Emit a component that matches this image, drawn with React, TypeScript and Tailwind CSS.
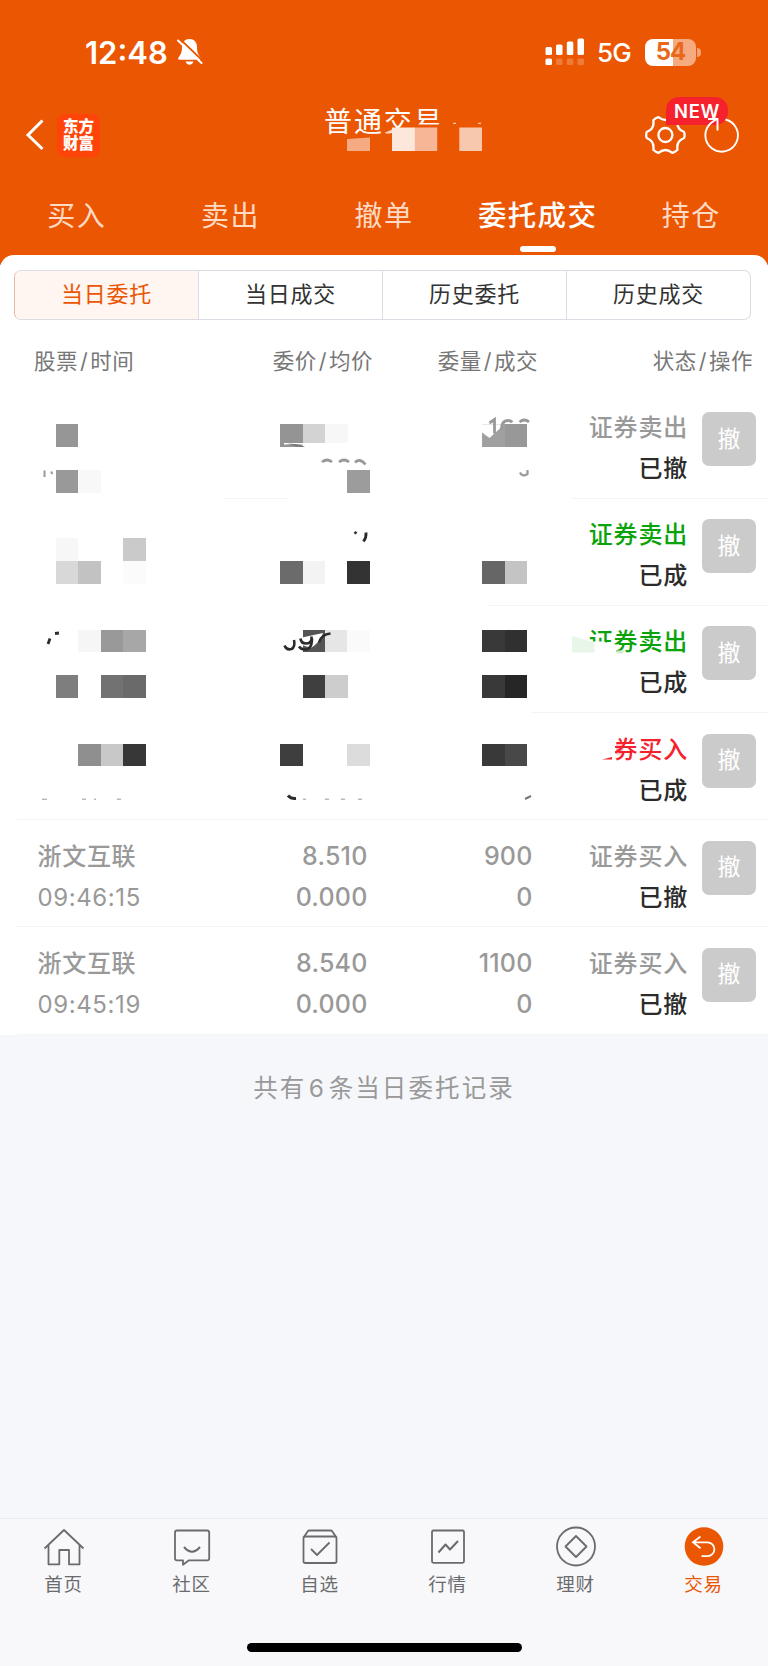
import React from "react";

const ORANGE = "#eb5602";

type Order = {
  name?: string;
  time?: string;
  price?: string;
  avg?: string;
  qty?: string;
  filled?: string;
  side: string;
  sideClass: string;
  status: string;
  divider: string;
};

const orders: Order[] = [
  { side: "证券卖出", sideClass: "text-[#999]", status: "已撤", divider: "ml-[572px]" },
  { side: "证券卖出", sideClass: "text-[#0aa30a]", status: "已成", divider: "ml-[488px]" },
  { side: "证券卖出", sideClass: "text-[#0aa30a]", status: "已成", divider: "ml-[531px]" },
  { side: "证券买入", sideClass: "text-[#f5222d]", status: "已成", divider: "ml-[17px]" },
  { name: "浙文互联", time: "09:46:15", price: "8.510", avg: "0.000", qty: "900", filled: "0", side: "证券买入", sideClass: "text-[#999]", status: "已撤", divider: "ml-[17px]" },
  { name: "浙文互联", time: "09:45:19", price: "8.540", avg: "0.000", qty: "1100", filled: "0", side: "证券买入", sideClass: "text-[#999]", status: "已撤", divider: "ml-[17px]" },
];

function StatusBar() {
  return (
    <div className="flex h-[104px] items-center pl-[85px] text-white">
      <span className="w-[85px] whitespace-nowrap text-[31px] font-semibold leading-none">12:48</span>
      <svg className="ml-[7px]" width="26" height="28" viewBox="1 1 26 28">
        <path d="M13.500 2c-4.600 0-7.500 3.400-7.500 8 0 5.500-1.300 7.500-3.500 10.500-.8 1-.4 2.300 1 2.300h20c1.400 0 1.800-1.300 1-2.300-2.200-3-3.500-5-3.500-10.500 0-4.600-2.900-8-7.500-8z" fill="#fff" />
        <path d="M9.500 24.600h8c-.5 2-2 3.200-4 3.200s-3.500-1.200-4-3.200z" fill="#fff" />
        <path d="M3.500 1.500l24 23" stroke={ORANGE} strokeWidth="1.800" />
        <path d="M2 3.500l23.500 22.500" stroke="#fff" strokeWidth="2" strokeLinecap="round" />
      </svg>
      <svg className="ml-[342px]" width="40" height="28" viewBox="0 0 40 28" fill="#fff">
        <rect x="0.500" y="9" width="6.500" height="8" rx="1.500" />
        <rect x="11" y="6.500" width="6.500" height="10.500" rx="1.500" />
        <rect x="21.800" y="3.500" width="6.500" height="13.500" rx="1.500" />
        <rect x="32.500" y="0.500" width="6.500" height="16.500" rx="1.500" />
        <rect x="0.500" y="20.500" width="6.500" height="6.500" rx="1.500" />
        <g opacity="0.22">
          <rect x="11" y="20.500" width="6.500" height="6.500" rx="1.500" />
          <rect x="21.800" y="20.500" width="6.500" height="6.500" rx="1.500" />
          <rect x="32.500" y="20.500" width="6.500" height="6.500" rx="1.500" />
        </g>
      </svg>
      <span className="ml-[12px] w-[35px] whitespace-nowrap pt-[2px] text-[26px] font-medium leading-none tracking-[-0.700px]">5G</span>
      <div className="ml-[13px] flex h-[27px] w-[51px] items-center justify-center rounded-[8px] bg-[linear-gradient(90deg,#fff_54%,#f5aa80_54%)] text-[24px] font-bold leading-none tracking-[-1px] text-[#e8681c]">
        54
      </div>
      <div className="ml-[1px] h-[9px] w-[4px] rounded-r-full bg-[#f3a075]" />
    </div>
  );
}

function NavBar() {
  return (
    <div className="flex h-[62px] items-center">
      <svg className="ml-[25px]" width="20" height="32" viewBox="0 0 20 32" fill="none" stroke="#fff" strokeWidth="3">
        <path d="M17.500 1.500L3 16l14.500 14" />
      </svg>
      <div className="ml-[12px] flex h-[43px] w-[43px] flex-col items-center justify-center rounded-[8px] bg-[#ff4409] text-[15.500px] font-black leading-[17px] text-white">
        <span>东方</span>
        <span>财富</span>
      </div>
      <div className="relative ml-[224px] w-[166px]">
        <div className="-mt-[27px] whitespace-nowrap text-[28px] leading-[30px] tracking-[1.900px] text-white">普通交易</div>
        <svg className="absolute left-0 top-[-26px]" width="166" height="48" viewBox="324 107.500 166 48">
          <path d="M385 132.500l11 1.500v16h-11zM407 124h60v12h-60z" fill={ORANGE} />
          <path d="M386 132.500q5-1.500 9-4.500" stroke="#f8c9ae" strokeWidth="1.800" fill="none" />
          <path d="M347 138.500l23-1.500v13.500h-23z" fill="#f5aa82" />
          <rect x="392" y="127" width="23" height="23.500" fill="#fde6da" />
          <rect x="414.800" y="127" width="22.400" height="23.500" fill="#f7b696" />
          <rect x="459.300" y="127" width="22.700" height="23.500" fill="#f8c8ae" />
          <path d="M453 122.800h3M478 122.800h3" stroke="#f8c8ae" strokeWidth="1.300" />
        </svg>
      </div>
      <div className="relative ml-[155px] h-[44px] w-[100px]">
        <svg className="absolute left-0 top-0" width="44" height="44" viewBox="-20.400 -22 44 44" fill="none" stroke="#fff" strokeWidth="2.300" strokeLinejoin="round">
          <circle r="7" />
          <path d="M18.700-3Q19.700 0 18.700 3Q10.600 6.100 12.100 14.700Q9.800 17 6.900 17.800Q0 12.200-6.900 17.800Q-9.800 17-12.100 14.700Q-10.600 6.100-18.700 3Q-19.700 0-18.700-3Q-10.600-6.100-12.100-14.700Q-9.800-17-6.900-17.800Q0-12.200 6.900-17.800Q9.800-17 12.100-14.700Q10.600-6.100 18.700-3z" />
        </svg>
        <div className="absolute left-[21px] top-[-16.500px] flex h-[28.500px] w-[62px] items-center justify-center rounded-[13px] rounded-bl-none bg-[#f5222d] text-[18.500px] font-semibold leading-none tracking-[0.700px] text-white">
          NEW
        </div>
        <svg className="absolute left-0 top-0" width="100" height="44" viewBox="645 113 100 44" fill="none" stroke="#fff" strokeWidth="1.900">
          <path d="M725.500 119.500a16.300 16.300 0 1 1-14.500 3.500q3-2.500 6.500-4" />
          <path d="M708 119h9.500v11.500" />
        </svg>
      </div>
    </div>
  );
}

function MainTabs() {
  const tabs = ["买入", "卖出", "撤单", "委托成交", "持仓"];
  return (
    <div className="grid h-[89px] grid-cols-5">
      {tabs.map((t) => {
        const active = t === "委托成交";
        return (
          <div key={t} className="flex flex-col items-center pt-[29.500px]">
            <span
              className={
                active
                  ? "whitespace-nowrap text-[28.500px] font-medium leading-[40px] tracking-[1.300px] text-white"
                  : "whitespace-nowrap text-[28px] leading-[40px] tracking-[1.500px] text-[#ffdac5]"
              }
            >
              {t}
            </span>
            {active && <span className="mt-[10.500px] h-[5.500px] w-[36px] rounded-full bg-white" />}
          </div>
        );
      })}
    </div>
  );
}

function Segments() {
  const items = ["当日委托", "当日成交", "历史委托", "历史成交"];
  return (
    <div className="ml-[14px] flex h-[50px] w-[737px] overflow-hidden rounded-[7px] border border-[#dcdce4] border-l-[#e9b79e] text-[22px] tracking-[0.700px]">
      {items.map((t, i) => (
        <div
          key={t}
          className={
            i === 0
              ? "flex flex-1 items-center justify-center bg-[#fff5f1] text-[#eb5602]"
              : "flex flex-1 items-center justify-center border-l border-[#dcdce4] text-[#333]"
          }
        >
          {t}
        </div>
      ))}
    </div>
  );
}

function Heading({ a, b, className }: { a: string; b: string; className: string }) {
  return (
    <span className={className}>
      {a}
      <span className="mx-[2px]">/</span>
      {b}
    </span>
  );
}

function OrderRow({ o }: { o: Order }) {
  return (
    <div className="flex h-[107.200px] flex-col">
      <div className="flex h-[106.200px] pl-[37.500px] pt-[15.500px] text-[24px] leading-[41px] text-[#999]">
        <div className="w-[120px] whitespace-nowrap">
          <div className="h-[41px] font-medium tracking-[0.700px]">{o.name}</div>
          <div className="h-[41px] tracking-[0.600px]">{o.time}</div>
        </div>
        <div className="w-[210px] text-right text-[25px] font-medium tracking-[0.200px]">
          <div className="h-[41px]">{o.price}</div>
          <div className="h-[41px]">{o.avg}</div>
        </div>
        <div className="w-[165px] text-right text-[25px] font-medium tracking-[0.200px]">
          <div className="h-[41px]">{o.qty}</div>
          <div className="h-[41px]">{o.filled}</div>
        </div>
        <div className="w-[155.500px] text-right font-medium tracking-[0.800px]">
          <div className={o.sideClass}>{o.side}</div>
          <div className="text-[#2b2b2b]">{o.status}</div>
        </div>
        <div className="ml-[14px] mt-[5px] flex h-[54px] w-[54px] items-center justify-center rounded-[7px] bg-[#cbcbcb] text-[23px] text-white">撤</div>
      </div>
      <div className={`h-px bg-[#f4f4f6] ${o.divider}`} />
    </div>
  );
}

/* Privacy mosaic: [column x, row y, tone] */
const tiles: [number, number, string][] = [
  [55.7, 423.7, "#969696"], [280, 423.7, "#949494"], [302.5, 423.7, "#d3d3d3"], [325, 423.7, "#f7f7f7"],
  [482, 423.7, "#a0a0a0"], [504.5, 423.7, "#989898"],
  [55.7, 469.3, "#999"], [78.2, 469.3, "#f8f8f8"], [347.4, 469.3, "#9c9c9c"],
  [55.7, 537.7, "#f7f7f7"], [123.1, 537.7, "#cacaca"],
  [55.7, 560.5, "#d8d8d8"], [78.2, 560.5, "#c2c2c2"], [123.1, 560.5, "#fbfbfb"],
  [280, 560.5, "#6b6b6b"], [302.5, 560.5, "#f3f3f3"], [347.4, 560.5, "#333"],
  [482, 560.5, "#666"], [504.5, 560.5, "#c4c4c4"],
  [78.2, 629, "#f6f6f6"], [100.7, 629, "#999"], [123.1, 629, "#a7a7a7"],
  [302.5, 629, "#555"], [325, 629, "#e6e6e6"], [347.4, 629, "#fafafa"],
  [482, 629, "#393939"], [504.5, 629, "#303030"],
  [55.7, 674.7, "#7e7e7e"], [100.7, 674.7, "#727272"], [123.1, 674.7, "#6a6a6a"],
  [302.5, 674.7, "#3f3f3f"], [325, 674.7, "#cdcdcd"],
  [482, 674.7, "#393939"], [504.5, 674.7, "#262626"],
  [78.2, 743, "#8f8f8f"], [100.7, 743, "#c8c8c8"], [123.1, 743, "#373737"],
  [280, 743, "#3e3e3e"], [347.4, 743, "#dcdcdc"],
  [482, 743, "#393939"], [504.5, 743, "#484848"],
];

function Mosaic() {
  return (
    <svg className="pointer-events-none absolute left-0 top-0" width="768" height="429" viewBox="0 391.500 768 429">
      <g shapeRendering="crispEdges">
        {tiles.map(([x, y, c]) => (
          <rect key={`${x}-${y}`} x={x} y={y} width="22.500" height="22.800" fill={c} />
        ))}
      </g>
      <g fill="none" stroke="#2b2b2b" strokeWidth="2.800">
        <path d="M302.500 442.500h46v5h-46zM284 442.500h20v1.500h-20z" fill="#fff" stroke="none" />
        <path d="M286 443.500q12-1 19 3h-9q-2-2-10-3z" fill="#7c7c7c" stroke="none" />
        <path d="M322 461.500q5-4 10 0M339 461.500q5-4 10 0M355 462q5-5 10.500 2" stroke="#999" />
        <path d="M44.500 470v6.500M51 471l1.500 2.500" stroke="#999" strokeWidth="2" />
        <path d="M480 430.500l9.500 7 15-13.800h-25z" fill="#fff" stroke="none" />
        <path d="M489.500 422.500l5-3.500v14M501.500 429q0-9 6.500-9 3 0 4 2M519.500 421.500q5-4 9.500 0" stroke="#999" />
        <path d="M520 472q2 5 7.500 1.500v-4" stroke="#999" strokeWidth="2.200" />
        <path d="M354.500 531.500l2 1.500M366 532q.5 5-2.500 9" />
        <path d="M55 633l4-.5M50 638l-2 5.500" />
        <path d="M302 637l21-4.500-2 6-6 6-4 3-9-3z" fill="#fff" stroke="none" />
        <path d="M284.500 645q2 5 7 3.500 4-2 2.500-9M311.500 636v3q-1 4-5.500 4-5 0-5.500-5M312 638q0 11-7 11-4 0-6-3M319 642q2-8 11.500-9" strokeWidth="2.600" />
        <path d="M288 795q3 3.500 8 3" strokeWidth="3" />
        <path d="M42 798.700h5M82 798.700h4M94 798.700h2M117 798.700h4M303 798.700h3M325 798.700h4M341 798.700h4M358 798.700h4" stroke="#999" strokeWidth="1" />
        <path d="M525 798.500l6-3" stroke="#777" strokeWidth="2" />
      </g>
      <path d="M587 645v-4h17l6 3h9l-5 12h-27z" fill="#fff" />
      <path d="M572 635.500l22.500 6.500v10h-22.500z" fill="#e7f6e7" />
      <path d="M617 650h8l-3 3h-5z" fill="#cdeccd" />
      <path d="M580 733h35v30h-35z" fill="#fff" />
      <path d="M602 759l10-2.500v2.500z" fill="#f5222d" />
      <path d="M616 743h9l-3 11h-6z" fill="#f5222d" opacity="0.28" />
      <path d="M225 498h64" stroke="#f4f4f6" />
    </svg>
  );
}

function TabIcon({ kind }: { kind: string }) {
  return (
    <svg width="44" height="44" viewBox="-22 -22 44 44" fill="none" stroke="#6b6b6e" strokeWidth="1.800" strokeLinejoin="round">
      {kind === "首页" && <path d="M-19.500 2.500L0-16 19.500 2.500M-15.500-1v19.300h10.800V4H5v14.300h10.500V-1" />}
      {kind === "社区" && (
        <>
          <path d="M-15-15.500h30q2.200 0 2.200 2v26q0 1.800-2 1.800H-3l-6 4.500v-4.500h-6q-2 0-2-1.800v-26q0-2 2-2z" />
          <path d="M-8 1Q0 10.500 8 1" strokeWidth="2" />
        </>
      )}
      {kind === "自选" && (
        <>
          <rect x="-16.500" y="-9.500" width="33" height="26.500" rx="1.800" />
          <path d="M-16.500-8.500l4.500-6.500q.5-.5 1.500-.5h21q1 0 1.500.5l4.500 6.500M-9 3l6 6L9.500-3.500" />
        </>
      )}
      {kind === "行情" && (
        <>
          <rect x="-16" y="-15.500" width="32" height="32.300" rx="1.500" />
          <path d="M-9.500 6.500l7-8L2 3.500 10-5" strokeWidth="2" />
        </>
      )}
      {kind === "理财" && (
        <>
          <circle cy="0.500" r="19" />
          <path d="M0-10L10.500 .5 0 11-10.500 .5z" />
        </>
      )}
      {kind === "交易" && (
        <>
          <circle cy="0.500" r="19.300" fill={ORANGE} stroke="none" />
          <path d="M-3.500-9.500l-7.500 5.800 7.500 6M-11-3.700H3.500a6.800 6.800 0 0 1 0 13.800H-2.500" stroke="#fff" strokeLinejoin="miter" />
        </>
      )}
    </svg>
  );
}

function TabBar() {
  return (
    <div className="flex h-[148.500px] flex-col border-t border-[#ececf1] bg-[#f8f8fb]">
      <div className="grid grid-cols-6 pt-[5px]">
        {["首页", "社区", "自选", "行情", "理财", "交易"].map((t) => (
          <div key={t} className="flex flex-col items-center">
            <TabIcon kind={t} />
            <span
              className={
                t === "交易"
                  ? "mr-[1px] mt-[3px] text-[18.500px] leading-[26px] tracking-[0.800px] text-[#eb5602]"
                  : "mr-[1px] mt-[3px] text-[18.500px] leading-[26px] tracking-[0.800px] text-[#6b6b6e]"
              }
            >
              {t}
            </span>
          </div>
        ))}
      </div>
      <div className="mx-auto mb-[14px] mt-auto h-[9px] w-[275px] rounded-full bg-black" />
    </div>
  );
}

export default function App() {
  return (
    <div className="flex h-[1666px] w-[768px] flex-col overflow-hidden bg-[#f6f7fa] font-['Inter','Noto_Sans_CJK_SC',sans-serif]">
      <header className="h-[265px] shrink-0 bg-[#eb5602]">
        <StatusBar />
        <NavBar />
        <MainTabs />
      </header>
      <main className="-mt-[10px] shrink-0 rounded-t-[14px] bg-white pt-[14.500px]">
        <Segments />
        <div className="flex h-[72px] items-center pl-[34px] pt-[12px] text-[21.500px] tracking-[0.500px] text-[#777]">
          <Heading a="股票" b="时间" className="w-[120px]" />
          <Heading a="委价" b="均价" className="w-[219px] text-right" />
          <Heading a="委量" b="成交" className="w-[165px] text-right" />
          <Heading a="状态" b="操作" className="w-[215px] text-right" />
        </div>
        <div className="relative">
          {orders.map((o, i) => (
            <OrderRow key={i} o={o} />
          ))}
          <Mosaic />
        </div>
      </main>
      <p className="mt-[33.500px] text-center text-[24.500px] leading-[40px] tracking-[2.100px] text-[#999]">
        共有<span className="mx-[2.500px]">6</span>条当日委托记录
      </p>
      <div className="mt-auto shrink-0">
        <TabBar />
      </div>
    </div>
  );
}
